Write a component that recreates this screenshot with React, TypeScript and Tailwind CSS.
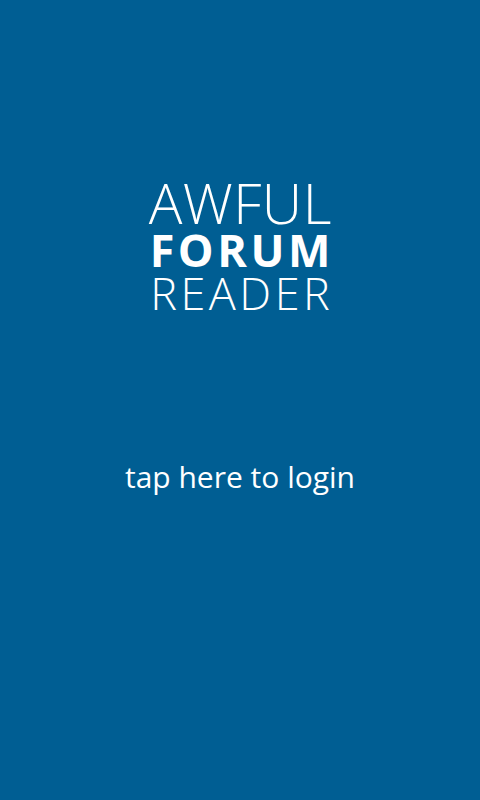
import React from "react";

export default function App() {
  return (
    <div
      className="w-[480px] h-[800px] bg-[#005e93] flex flex-col items-center text-white"
      style={{ fontFamily: '"Open Sans", "Noto Sans", sans-serif' }}
    >
      <div className="mt-[177px] flex flex-col items-center">
        <div className="text-[56px] font-light leading-[51px] tracking-[0.5px] pl-[0.5px]">AWFUL</div>
        <div className="text-[45px] font-bold leading-[43px] tracking-[3.5px] pl-[3.5px]">FORUM</div>
        <div className="text-[45px] font-[350] leading-[43px] tracking-[3.5px] pl-[3.5px]">READER</div>
      </div>
      <button className="mt-[148px] text-[30px] font-normal leading-none text-white">
        tap here to login
      </button>
    </div>
  );
}
